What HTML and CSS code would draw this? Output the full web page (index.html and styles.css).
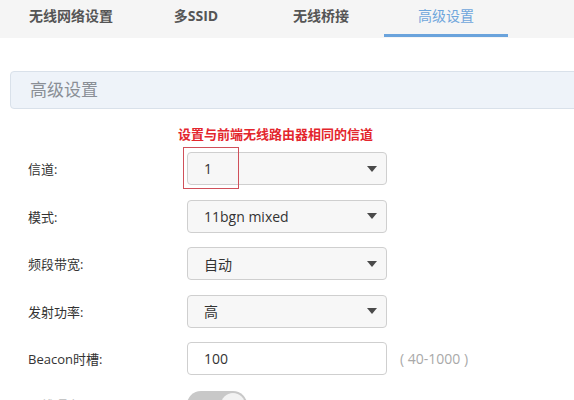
FILE: index.html
```html
<!DOCTYPE html>
<html lang="zh-CN">
<head>
  <meta charset="UTF-8">
  <title>高级设置</title>
  <link rel="stylesheet" href="styles.css">
</head>
<body>

  <nav class="tabs">
    <a class="tab">无线网络设置</a>
    <a class="tab">多SSID</a>
    <a class="tab">无线桥接</a>
    <a class="tab active">高级设置</a>
  </nav>

  <div class="panel-head">高级设置</div>

  <form class="form">
    <p class="hint">设置与前端无线路由器相同的信道</p>

    <div class="row">
      <label>信道:</label>
      <div class="field">
        <div class="select"><span>1</span><i class="caret"></i></div>
        <div class="mark"></div>
      </div>
    </div>

    <div class="row">
      <label>模式:</label>
      <div class="select"><span>11bgn mixed</span><i class="caret"></i></div>
    </div>

    <div class="row">
      <label>频段带宽:</label>
      <div class="select"><span>自动</span><i class="caret"></i></div>
    </div>

    <div class="row">
      <label>发射功率:</label>
      <div class="select"><span>高</span><i class="caret"></i></div>
    </div>

    <div class="row">
      <label>Beacon时槽:</label>
      <input class="text" type="text" value="100">
      <span class="range">( 40-1000 )</span>
    </div>

    <div class="row row-switch">
      <label class="dim">无线隔离:</label>
      <div class="switch"><i class="knob"></i></div>
    </div>
  </form>

</body>
</html>
```

FILE: styles.css
```css
* { box-sizing: border-box; }
body {
  margin: 0;
  background: #fff;
  color: #333;
  font-family: "Open Sans", "Noto Sans CJK SC", sans-serif;
  overflow: hidden;
}

/* tabs */
.tabs {
  display: flex;
  gap: 1px;
  height: 38px;
  padding-left: 9px;
  background: #f5f5f5;
}
.tab {
  width: 124px;
  text-align: center;
  font-size: 14px;
  font-weight: bold;
  line-height: 31px;
  color: #555;
  border-bottom: 3px solid transparent;
  height: 37px;
}
.tab.active {
  color: #6fa6dc;
  font-weight: normal;
  border-bottom-color: #6aa3dc;
}

/* section header */
.panel-head {
  margin: 33px 0 0 10px;
  height: 38px;
  width: 600px;
  padding-left: 19px;
  line-height: 36px;
  font-size: 17px;
  color: #8a8f96;
  background: #eef3f9;
  border: 1px solid #d9e1ea;
  border-radius: 4px;
}

/* form */
.form {
  margin: 0;
  padding: 17px 0 0 28px;
}
.hint {
  margin: 0 0 9px 150px;
  font-size: 13px;
  font-weight: bold;
  line-height: 17px;
  color: #e3262d;
}
.row {
  display: flex;
  align-items: center;
  height: 33px;
  margin-bottom: 14.5px;
}
.row label {
  width: 159px;
  font-size: 13px;
  color: #333;
}
.row label.dim { color: #bbb; }
.row-switch { align-items: flex-start; }
.row-switch label { margin-top: 5px; }
.field { position: relative; }
.select, .text {
  display: flex;
  align-items: center;
  justify-content: space-between;
  width: 200px;
  height: 33px;
  padding: 0 9px 0 16px;
  font: 14px "Open Sans", "Noto Sans CJK SC", sans-serif;
  color: #333;
  background: #f7f7f7;
  border: 1px solid #cfcfcf;
  border-radius: 4px;
}
.text { background: #fff; outline: none; }
.caret {
  width: 0;
  height: 0;
  border-left: 5px solid transparent;
  border-right: 5px solid transparent;
  border-top: 6px solid #4a4a4a;
}
.mark {
  position: absolute;
  left: -4px;
  top: -5px;
  width: 56px;
  height: 42px;
  border: 1px solid #d0505a;
}
.range {
  margin-left: 13px;
  font-size: 14px;
  color: #a9a9a9;
}
.switch {
  position: relative;
  width: 60px;
  height: 28px;
  margin-top: 1px;
  border-radius: 14px;
  background: #c8c8c8;
}
.knob {
  position: absolute;
  right: 2px;
  top: 2px;
  width: 24px;
  height: 24px;
  border-radius: 50%;
  background: #f2f2f2;
}
```
